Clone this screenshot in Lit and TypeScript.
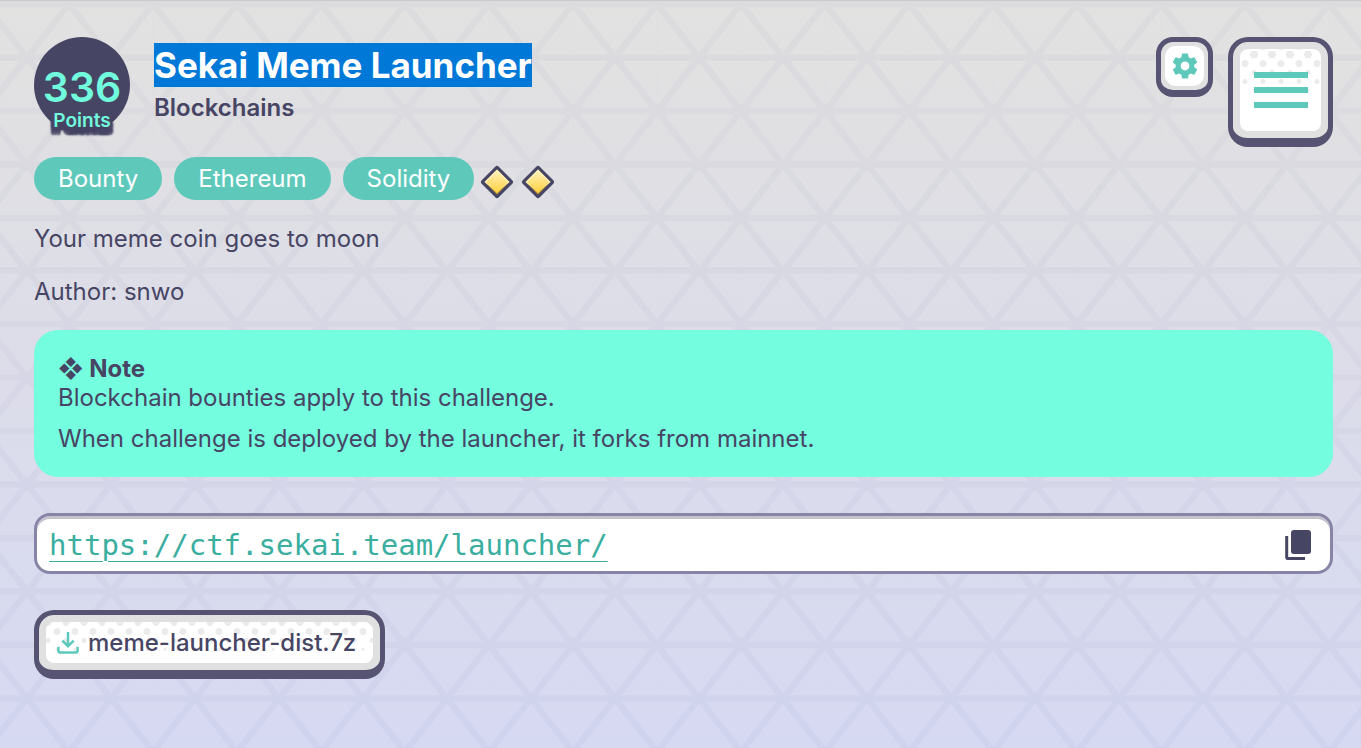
import { LitElement, html, css, svg, unsafeCSS } from "lit";
import { customElement } from "lit/decorators.js";

const lattice = encodeURIComponent(
  `<svg xmlns="http://www.w3.org/2000/svg" width="84" height="106.8" viewBox="0 0 84 106.8" preserveAspectRatio="none"><path d="M-8 0H92M-8 53.4H92M-8 106.8H92M-8 -10.17L92 116.97M92 -10.17L-8 116.97" fill="none" stroke="#7474a8" stroke-opacity=".055" stroke-width="6.4"/><path d="M0 0V106.8" stroke="#7474b4" stroke-opacity=".015" stroke-width="2"/></svg>`
);

const gear = svg`<svg width="26" height="26" viewBox="2 2 20 20" aria-hidden="true"><path fill="currentColor" d="M19.14 12.94c.04-.3.06-.61.06-.94 0-.32-.02-.64-.07-.94l2.03-1.58c.18-.14.23-.41.12-.61l-1.92-3.32c-.12-.22-.37-.29-.59-.22l-2.39.96c-.5-.38-1.03-.7-1.62-.94l-.36-2.54c-.04-.24-.24-.41-.48-.41h-3.84c-.24 0-.43.17-.47.41l-.36 2.54c-.59.24-1.13.57-1.62.94l-2.39-.96c-.22-.08-.47 0-.59.22L2.74 8.87c-.12.21-.08.47.12.61l2.03 1.58c-.05.3-.09.63-.09.94s.02.64.07.94l-2.03 1.58c-.18.14-.23.41-.12.61l1.92 3.32c.12.22.37.29.59.22l2.39-.96c.5.38 1.03.7 1.62.94l.36 2.54c.05.24.24.41.48.41h3.84c.24 0 .44-.17.47-.41l.36-2.54c.59-.24 1.13-.56 1.62-.94l2.39.96c.22.08.47 0 .59-.22l1.92-3.32c.12-.22.07-.47-.12-.61l-2.01-1.58zM12 15.4c-1.88 0-3.4-1.52-3.4-3.4s1.52-3.4 3.4-3.4 3.4 1.52 3.4 3.4-1.52 3.4-3.4 3.4z"/></svg>`;

const bars = svg`<svg width="54" height="36" viewBox="0 0 54 36" aria-hidden="true"><path fill="currentColor" d="M0 0h54v6H0zM0 15h54v6H0zM0 30h54v6H0z"/></svg>`;

const copy = svg`<svg width="26" height="30" viewBox="0 0 26 30" aria-hidden="true"><rect x="6" width="20" height="24" rx="3" fill="currentColor"/><path d="M1.7 6V27.2Q1.7 28.5 3 28.5H20" fill="none" stroke="currentColor" stroke-width="3"/></svg>`;

const download = svg`<svg width="22" height="22" viewBox="0 0 22 22" fill="none" stroke="currentColor" stroke-width="2.5" aria-hidden="true"><path d="M11 0V14M5.3 8.6L11 14.2L16.7 8.6"/><path d="M1.4 14.7V18.4Q1.4 20.5 3.5 20.5H18.5Q20.6 20.5 20.6 18.4V14.7"/></svg>`;

const gem = svg`<svg width="34" height="34" viewBox="0 0 34 34" aria-hidden="true">
  <defs><linearGradient id="gold" x1="0" y1="0" x2="0" y2="1"><stop offset="0" stop-color="#fff0b8"/><stop offset="1" stop-color="#fdd13f"/></linearGradient></defs>
  <path d="M17 3.5L30.5 17L17 30.5L3.5 17Z" fill="#474564" stroke="#474564" stroke-width="5" stroke-linejoin="round"/>
  <path d="M17 4.5L29.5 17L17 29.5L4.5 17Z" fill="#c39b35"/>
  <path d="M17 4.5L29.5 17L17 27L4.5 17Z" fill="#fff6cc"/>
  <path d="M17 6L28 17L17 28L6 17Z" fill="url(#gold)"/></svg>`;

@customElement("app-root")
export class AppRoot extends LitElement {
  static styles = css`
    :host {
      display: block;
      font: 400 24px/29px Inter, sans-serif;
      color: #474564;
    }
    * { box-sizing: border-box; }
    .page {
      min-height: 100vh;
      padding: 36px 28px 36px 34px;
      border-top: 1px solid #c9c9c9;
      background:
        url("data:image/svg+xml,${unsafeCSS(lattice)}") 69px 3px,
        linear-gradient(#e2e2e1, #e0e0e3 18%, #dddde9 45%, #d6d9f2);
    }
    .header { display: flex; align-items: flex-start; }
    .badge {
      display: flex;
      flex-direction: column;
      align-items: center;
      width: 96px;
      height: 96px;
      margin-right: 24px;
      padding-top: 26px;
      border-radius: 50%;
      background: #474564;
      color: #72fcde;
      font-weight: 600;
    }
    .score { font-size: 41px; line-height: 48px; }
    .unit {
      font-size: 19px;
      line-height: 20px;
      text-shadow: 3px 0 2px #474564, -3px 0 2px #474564, 0 3px 2px #474564,
        3px 3px 2px #474564, -3px 3px 2px #474564, 0 6px 2px #474564,
        3px 6px 2px #474564, -3px 6px 2px #474564,
        3px 8px 2px #474564, -3px 8px 2px #474564, 0 8px 2px #474564;
    }
    .heading { flex: 1; padding-top: 6px; }
    h1, h2, p { margin: 0; }
    h1 { font-size: 35px; line-height: 44px; font-weight: 700; }
    h1 span { display: inline-block; background: #0078d7; color: #fff; }
    h2 { font-size: 24px; line-height: 29px; font-weight: 600; margin-top: 6px; }
    .actions { display: flex; align-items: flex-start; gap: 15px; }
    .key {
      display: inline-flex;
      margin: 0;
      padding: 7px;
      border: 5px solid #565472;
      border-bottom-width: 9px;
      border-radius: 20px;
      background: #e0e0e0;
      background-clip: padding-box;
      color: #5ec9bb;
      font: inherit;
      cursor: pointer;
      text-decoration: none;
    }
    .key.small { padding: 4px; border-radius: 17px; border-bottom-width: 7px; }
    .face {
      display: flex;
      align-items: center;
      justify-content: center;
      border-radius: 8px;
      background-color: #fff;
      background-repeat: repeat-x;
      background-size: 18px 9px;
    }
    .small .face { width: 39px; height: 40px; border-radius: 11px; }
    .menu .face {
      width: 81px;
      height: 82px;
      background-image:
        radial-gradient(circle, #ebebeb 4px, transparent 5px),
        radial-gradient(circle, #ebebeb 4px, transparent 4px),
        radial-gradient(circle, #ebebeb 3px, transparent 4px),
        radial-gradient(circle, #ebebeb 2px, transparent 3px),
        radial-gradient(circle, #ebebeb 2px, transparent 3px),
        radial-gradient(circle, #ebebeb 1px, transparent 2px);
      background-position: -4px -8px, 5px 1px, -4px 10px, 5px 19px, -4px 28px, 5px 37px;
    }
    .tags { display: flex; align-items: center; gap: 12px; margin-top: 10px; }
    .tag {
      padding: 7px 24px;
      border-radius: 22px;
      background: #5ec9bb;
      color: #fff;
    }
    .gems { display: flex; gap: 7px; margin: 6px 0 0 -6px; }
    .tags svg, .key svg, .copy svg { display: block; flex: none; }
    .text { margin-top: 24px; }
    .note {
      margin-top: 24px;
      padding: 24px;
      border-radius: 24px;
      background: #74fddf;
    }
    .note strong { display: block; font-weight: 700; }
    .note p + p { margin-top: 12px; }
    .link {
      display: flex;
      align-items: center;
      justify-content: space-between;
      height: 61px;
      margin-top: 36px;
      padding: 2px 19px 0 12px;
      border: 3px solid #8784a6;
      border-radius: 16px;
      background: #fff;
      box-shadow: inset 0 3px #c4c3cf;
    }
    .link a {
      color: #3aae9f;
      font: 29px/36px "DejaVu Sans Mono", monospace;
      text-decoration-thickness: 1px;
      text-underline-offset: 6px;
    }
    .copy { padding: 0; border: 0; background: none; color: #474564; cursor: pointer; }
    .files { display: flex; margin-top: 36px; }
    .file .face {
      gap: 9px;
      height: 41px;
      padding: 0 17px 0 11px;
      color: #5ec9bb;
      background-image:
        radial-gradient(circle, #ebebeb 3px, transparent 4px),
        radial-gradient(circle, #ebebeb 3px, transparent 4px),
        radial-gradient(circle, #ebebeb 2px, transparent 3px),
        radial-gradient(circle, #ebebeb 1px, transparent 2px);
      background-position: -7px -4px, 2px 5px, -7px 14px, 2px 23px;
    }
    .file .name { color: #474564; font-weight: 500; }
  `;

  render() {
    return html`
      <main class="page">
        <header class="header">
          <div class="badge"><span class="score">336</span><span class="unit">Points</span></div>
          <div class="heading">
            <h1><span>Sekai Meme Launcher</span></h1>
            <h2>Blockchains</h2>
          </div>
          <div class="actions">
            <button class="key small" type="button" aria-label="Settings"><span class="face">${gear}</span></button>
            <button class="key menu" type="button" aria-label="Menu"><span class="face">${bars}</span></button>
          </div>
        </header>
        <div class="tags">
          ${["Bounty", "Ethereum", "Solidity"].map((t) => html`<span class="tag">${t}</span>`)}
          <span class="gems">${gem}${gem}</span>
        </div>
        <p class="text">Your meme coin goes to moon</p>
        <p class="text">Author: snwo</p>
        <section class="note">
          <strong>❖ Note</strong>
          <p>Blockchain bounties apply to this challenge.</p>
          <p>When challenge is deployed by the launcher, it forks from mainnet.</p>
        </section>
        <div class="link">
          <a href="https://ctf.sekai.team/launcher/">https://ctf.sekai.team/launcher/</a>
          <button class="copy" type="button" aria-label="Copy link">${copy}</button>
        </div>
        <div class="files">
          <a class="key file" href="#meme-launcher-dist.7z"><span class="face">${download}<span class="name">meme-launcher-dist.7z</span></span></a>
        </div>
      </main>
    `;
  }
}
